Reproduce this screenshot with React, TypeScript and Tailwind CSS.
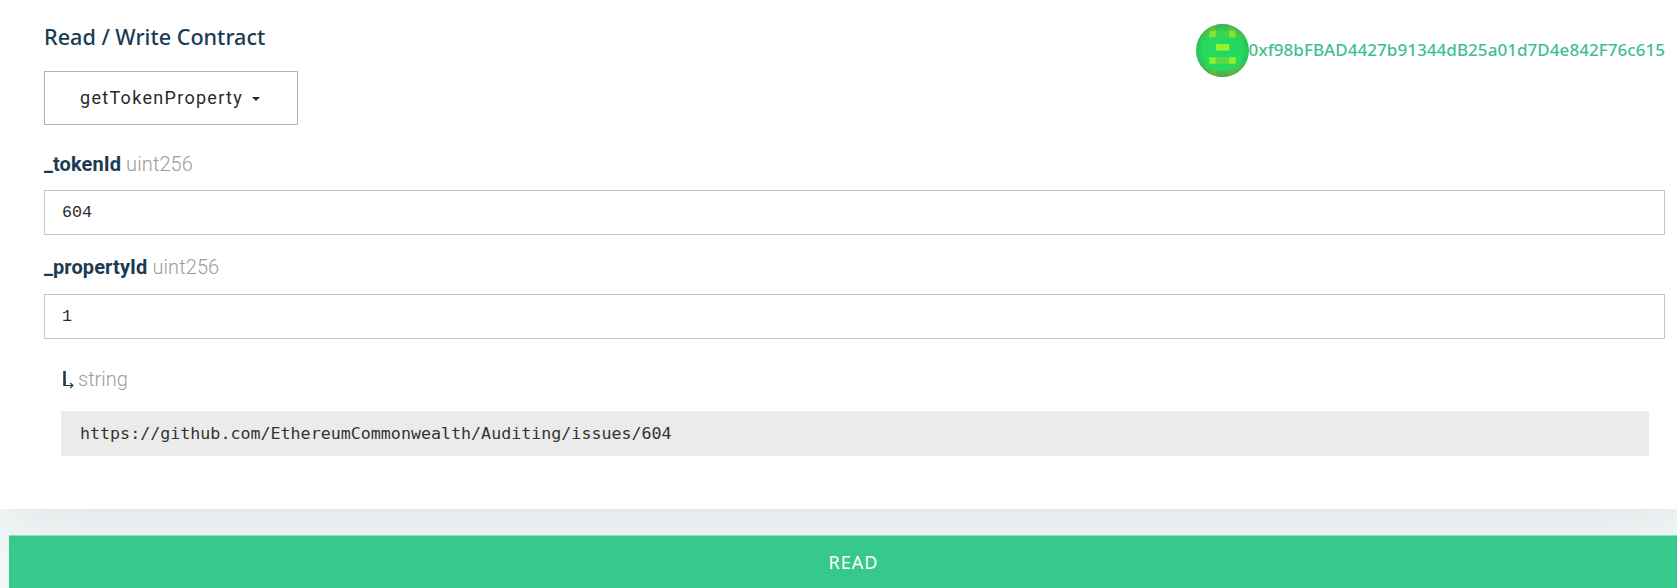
const navy = "text-[#1b3b54]";

// blockie cells, 8x8, read off the reference
const cells: [number, number, string][] = [
  [0, 0, "#55b84a"], [1, 0, "#3fc952"], [2, 0, "#6cc844"], [3, 0, "#35c955"], [4, 0, "#35c955"], [5, 0, "#6cc844"], [6, 0, "#3fc952"], [7, 0, "#55b84a"],
  [0, 1, "#4cc84c"], [1, 1, "#45cf50"], [2, 1, "#82e82e"], [3, 1, "#3fd24e"], [4, 1, "#3fd24e"], [5, 1, "#82e82e"], [6, 1, "#45cf50"], [7, 1, "#4cc84c"],
  [3, 3, "#98f52a"], [4, 3, "#98f52a"],
  [2, 5, "#90f02c"], [3, 5, "#5fd646"], [4, 5, "#5fd646"], [5, 5, "#90f02c"],
  [0, 6, "#4cc84c"], [1, 6, "#45cf50"], [6, 6, "#45cf50"], [7, 6, "#4cc84c"],
  [0, 7, "#6fb83c"], [1, 7, "#4fbb46"], [2, 7, "#74bf3c"], [3, 7, "#4fbb46"], [4, 7, "#4fbb46"], [5, 7, "#74bf3c"], [6, 7, "#4fbb46"], [7, 7, "#6fb83c"],
];

function Blockie() {
  return (
    <svg width="53" height="53" viewBox="0 0 8 8" className="shrink-0 rounded-full">
      <defs>
        <filter id="soft"><feGaussianBlur stdDeviation="0.06" /></filter>
        <radialGradient id="rim">
          <stop offset="0.75" stopColor="#4a7a50" stopOpacity="0" />
          <stop offset="1" stopColor="#4a7a50" stopOpacity="0.3" />
        </radialGradient>
      </defs>
      <rect width="8" height="8" fill="#24d95f" />
      <g filter="url(#soft)">
        {cells.map(([x, y, c]) => (
          <rect key={`${x}-${y}`} x={x} y={y} width="1" height="1" fill={c} />
        ))}
      </g>
      <circle cx="4" cy="4" r="4" fill="url(#rim)" />
    </svg>
  );
}

function Field({ name, value, className }: { name: string; value: string; className: string }) {
  return (
    <div className={className}>
      <div className="h-[35px] flex items-center font-['Roboto',sans-serif] text-[20px] tracking-[0.1px]">
        <span className={`font-bold ${navy}`}>{name}</span>
        <span className="ml-[5px] font-light text-[#9c9c9c]">uint256</span>
      </div>
      <div className="h-[45px] mt-auto border border-[#aed6a9] px-[17px] flex items-center font-['Liberation_Mono',monospace] text-[16.7px] text-[#2b2b2b]">
        {value}
      </div>
    </div>
  );
}

export default function App() {
  return (
    <div className="w-[1677px] h-[588px] bg-white overflow-hidden">
      <div className="h-[509px] pl-[44px] pr-[12px] pt-[22px]">
        <div className="flex justify-between h-[49px]">
          <h2 className={`font-['Noto_Sans',sans-serif] text-[21.6px] font-medium leading-[30px] ${navy}`}>Read / Write Contract</h2>
          <div className="flex items-center h-[56px]">
            <Blockie />
            <span className="font-['Noto_Sans',sans-serif] text-[17px] font-medium tracking-[0.05px] text-[#3fbf90]">
              0xf98bFBAD4427b91344dB25a01d7D4e842F76c615
            </span>
          </div>
        </div>
        <div className="w-[254px] h-[54px] border border-[#b3b3b3] flex items-center pl-[35px] pb-[2px] font-['Roboto',sans-serif] text-[18px] tracking-[1.3px] text-[#2a2a2a]">
          getTokenProperty
          <span className="ml-[9px] mt-[3px] border-x-[4px] border-x-transparent border-t-[4px] border-t-[#2a2a2a]" />
        </div>
        <Field name="_tokenId" value="604" className="flex flex-col h-[89px] mt-[21px]" />
        <Field name="_propertyId" value="1" className="flex flex-col h-[90px] mt-[14px]" />
        <div className="pl-[17px] pr-[16px]">
          <div className="h-[72px] flex items-center pl-[2px] pt-[8px] font-['Roboto',sans-serif] text-[20px]">
            <svg width="11" height="20" viewBox="0 0 11 20" className="shrink-0">
              <path d="M1.5 2V17" stroke="#1b3b54" strokeWidth="2.6" fill="none" />
              <path d="M1 16.5H10M7.2 14l2.8 2.5L7.2 19" stroke="#1b3b54" strokeWidth="1.1" fill="none" />
            </svg>
            <span className="ml-[4px] font-light text-[#9c9c9c]">string</span>
          </div>
          <div className="h-[45px] bg-[#ebebeb] pl-[19px] pt-[1px] flex items-center font-['DejaVu_Sans_Mono',monospace] text-[16.66px] text-[#333333]">
            https://github.com/EthereumCommonwealth/Auditing/issues/604
          </div>
        </div>
      </div>
      <div className="relative h-[79px] overflow-hidden bg-[#f3f6f7] pt-[26px] pl-[9px]">
        <div className="absolute left-[9px] right-0 -top-[40px] h-[40px] shadow-[0_0_60px_rgba(40,50,55,0.14)]" />
        <button className="relative w-full h-[53px] pl-[21px] bg-[#36c98b] border-t border-[#8fe0bd] font-['Noto_Sans',sans-serif] text-[18px] tracking-[1px] text-white">
          READ
        </button>
      </div>
    </div>
  );
}
